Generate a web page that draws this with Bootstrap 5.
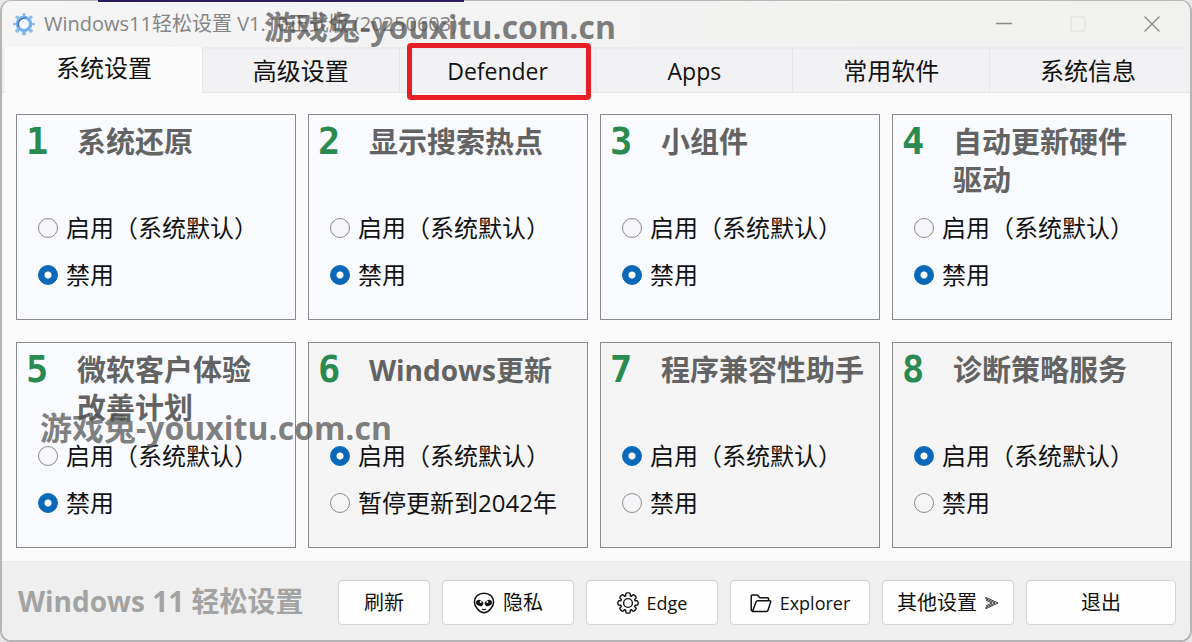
<!DOCTYPE html>
<html lang="zh-CN">
<head>
<meta charset="utf-8">
<meta name="viewport" content="width=device-width, initial-scale=1">
<title>Windows11轻松设置</title>
<link href="https://cdn.jsdelivr.net/npm/bootstrap@5.3.0/dist/css/bootstrap.min.css" rel="stylesheet">
<style>
  body { font-family: "Open Sans", "Noto Sans CJK SC", sans-serif; background: #e9e9ea; color: #111; }
  .desk-strip { top: 0; left: 98px; width: 366px; height: 2px; background: #2b1a5c; z-index: 2; }
  .app-window { min-height: 100vh; border: 2px solid #b5b5b5; border-top-width: 1px; border-radius: 11px; background: #fbfbfb; overflow: hidden; }
  .title-bar { height: 46px; padding: 0 28px 0 10px; background: linear-gradient(90deg, #f5f5f6, #f1f1ef); }
  .title-text { font-size: 20px; line-height: 28px; color: #858585; margin-left: 8px; }
  .win-controls { gap: 54px; }
  .win-btn { width: 20px; height: 20px; border: 0; padding: 0; background: none; display: flex; align-items: center; justify-content: center; }
  .tab-strip { height: 46px; padding: 0 4px 0 3px; background: #f1f1f2; border-bottom: 1px solid #e6e6e8; }
  .tab-btn { position: relative; flex: 1 1 0; min-width: 0; border: 0; border-left: 1px solid #e7e7ea; border-top: 2px solid #ececee; background: #f2f2f4; padding: 0; font-size: 24px; line-height: 36px; color: #111; }
  .tab-btn.latin { font-size: 23px; }
  .tab-btn.current { background: #fbfbfb; border-color: #fbfbfb; padding-bottom: 6px; margin-bottom: -1px; }
  .marker { position: absolute; inset: -6px 4px -8px 7px; border: 5px solid #e81e25; border-radius: 4px; pointer-events: none; }
  .option-grid { display: grid; grid-template-columns: repeat(4, 1fr); gap: 22px 12px; padding: 21px 18px 13px 14px; }
  .option-card { border: 1px solid #8b8b8f; background: #fafbff; min-height: 206px; padding: 0 8px 21px 9px; display: flex; flex-direction: column; }
  .option-card.plain { background: #f5f5f5; }
  .option-head { height: 89px; padding-top: 8px; }
  .option-num { width: 51px; flex: none; font: bold 37px/38px "DejaVu Sans Mono", monospace; color: #2a8b50; }
  .option-title { font-size: 29px; line-height: 38px; font-weight: 700; color: #636363; margin: 0; white-space: nowrap; }
  .option-title.latin { font-size: 28px; }
  .option-line { height: 47px; padding-left: 12px; gap: 8px; }
  .option-line .form-check-input { width: 20px; height: 20px; margin: 0; border: 1px solid #8d8d8d; background-color: #f6f6f8; flex: none; }
  .option-line .form-check-input:checked { border-color: #0a68b8; background: radial-gradient(circle, #fff 0 3px, #0a68b8 4px); }
  .option-line label { font-size: 24px; line-height: 36px; white-space: nowrap; }
  .foot-bar { background: #efefef; border-top: 1px solid #e8e8e8; padding: 18px 14px 15px 16px; }
  .brand-text { font-size: 28px; line-height: 42px; font-weight: 700; color: #a3a3a3; white-space: nowrap; }
  .foot-actions { gap: 12px; }
  .foot-btn { height: 45px; padding: 0; border: 1px solid #d4d4d4; border-radius: 4px; background: #fefefe; font-size: 20px; line-height: 28px; color: #111; display: flex; align-items: center; justify-content: center; gap: 8px; white-space: nowrap; }
  .foot-btn.latin { font-size: 18px; }
  .w-a { width: 92px; } .w-b { width: 132px; } .w-c { width: 140px; } .w-d { width: 150px; }
  .wm { position: absolute; z-index: 5; font-size: 32px; line-height: 40px; font-weight: 700; color: rgba(80, 80, 80, .72); white-space: nowrap; pointer-events: none; }
  .wm-top { left: 264px; top: 7px; }
  .wm-low { left: 40px; top: 408px; }
  @media (max-width: 1100px) {
    .option-grid { grid-template-columns: repeat(auto-fill, minmax(270px, 1fr)); }
    .foot-bar, .foot-actions { flex-wrap: wrap; }
  }
</style>
</head>
<body>
<div class="position-absolute desk-strip"></div>
<div class="app-window position-relative d-flex flex-column">
  <header class="title-bar d-flex align-items-center">
    <svg width="24" height="24" viewBox="0 0 24 24" aria-hidden="true">
      <g fill="#8fbdea"><circle cx="12" cy="2.6" r="1.7"/><circle cx="18.8" cy="5.2" r="1.7"/><circle cx="21.6" cy="12" r="1.5"/><circle cx="18.8" cy="18.8" r="2"/><circle cx="12" cy="21.4" r="2.2"/><circle cx="5.2" cy="18.8" r="2"/><circle cx="2.4" cy="12" r="1.5"/><circle cx="5.2" cy="5.2" r="1.7"/></g>
      <circle cx="12" cy="12" r="6.6" fill="#f7fbff" stroke="#78b0ea" stroke-width="3.4"/>
      <path d="M7 15a6 6 0 0 1 7-8.600" fill="none" stroke="#3c6eaa" stroke-width="1.300"/>
    </svg>
    <div class="title-text text-nowrap">Windows11轻松设置 V1.10正式版 (20250603)</div>
    <div class="d-flex ms-auto win-controls">
      <button class="win-btn" type="button" aria-label="最小化"><svg width="18" height="18"><path d="M1 8.500h16" stroke="#888" stroke-width="1.300"/></svg></button>
      <button class="win-btn" type="button" aria-label="最大化" disabled><svg width="18" height="18"><rect x="2" y="2" width="14" height="14" rx="1" fill="none" stroke="#dcdcdc"/></svg></button>
      <button class="win-btn" type="button" aria-label="关闭"><svg width="18" height="18"><path d="M1.500 1.500l15 15M16.500 1.500l-15 15" stroke="#888" stroke-width="1.300"/></svg></button>
    </div>
  </header>

  <nav class="tab-strip d-flex" role="tablist">
    <button class="tab-btn current" role="tab" aria-selected="true" type="button">系统设置</button>
    <button class="tab-btn" role="tab" type="button">高级设置</button>
    <button class="tab-btn latin" role="tab" type="button">Defender<span class="marker"></span></button>
    <button class="tab-btn latin" role="tab" type="button">Apps</button>
    <button class="tab-btn" role="tab" type="button">常用软件</button>
    <button class="tab-btn" role="tab" type="button">系统信息</button>
  </nav>

  <main class="option-grid flex-grow-1">
    <section class="option-card">
      <div class="option-head d-flex"><span class="option-num">1</span><h2 class="option-title">系统还原</h2></div>
      <div class="option-line d-flex align-items-center"><input class="form-check-input" type="radio" name="g1" id="g1a"><label for="g1a">启用（系统默认）</label></div>
      <div class="option-line d-flex align-items-center"><input class="form-check-input" type="radio" name="g1" id="g1b" checked><label for="g1b">禁用</label></div>
    </section>
    <section class="option-card">
      <div class="option-head d-flex"><span class="option-num">2</span><h2 class="option-title">显示搜索热点</h2></div>
      <div class="option-line d-flex align-items-center"><input class="form-check-input" type="radio" name="g2" id="g2a"><label for="g2a">启用（系统默认）</label></div>
      <div class="option-line d-flex align-items-center"><input class="form-check-input" type="radio" name="g2" id="g2b" checked><label for="g2b">禁用</label></div>
    </section>
    <section class="option-card">
      <div class="option-head d-flex"><span class="option-num">3</span><h2 class="option-title">小组件</h2></div>
      <div class="option-line d-flex align-items-center"><input class="form-check-input" type="radio" name="g3" id="g3a"><label for="g3a">启用（系统默认）</label></div>
      <div class="option-line d-flex align-items-center"><input class="form-check-input" type="radio" name="g3" id="g3b" checked><label for="g3b">禁用</label></div>
    </section>
    <section class="option-card">
      <div class="option-head d-flex"><span class="option-num">4</span><h2 class="option-title">自动更新硬件<br>驱动</h2></div>
      <div class="option-line d-flex align-items-center"><input class="form-check-input" type="radio" name="g4" id="g4a"><label for="g4a">启用（系统默认）</label></div>
      <div class="option-line d-flex align-items-center"><input class="form-check-input" type="radio" name="g4" id="g4b" checked><label for="g4b">禁用</label></div>
    </section>
    <section class="option-card">
      <div class="option-head d-flex"><span class="option-num">5</span><h2 class="option-title">微软客户体验<br>改善计划</h2></div>
      <div class="option-line d-flex align-items-center"><input class="form-check-input" type="radio" name="g5" id="g5a"><label for="g5a">启用（系统默认）</label></div>
      <div class="option-line d-flex align-items-center"><input class="form-check-input" type="radio" name="g5" id="g5b" checked><label for="g5b">禁用</label></div>
    </section>
    <section class="option-card plain">
      <div class="option-head d-flex"><span class="option-num">6</span><h2 class="option-title latin">Windows更新</h2></div>
      <div class="option-line d-flex align-items-center"><input class="form-check-input" type="radio" name="g6" id="g6a" checked><label for="g6a">启用（系统默认）</label></div>
      <div class="option-line d-flex align-items-center"><input class="form-check-input" type="radio" name="g6" id="g6b"><label for="g6b">暂停更新到2042年</label></div>
    </section>
    <section class="option-card plain">
      <div class="option-head d-flex"><span class="option-num">7</span><h2 class="option-title">程序兼容性助手</h2></div>
      <div class="option-line d-flex align-items-center"><input class="form-check-input" type="radio" name="g7" id="g7a" checked><label for="g7a">启用（系统默认）</label></div>
      <div class="option-line d-flex align-items-center"><input class="form-check-input" type="radio" name="g7" id="g7b"><label for="g7b">禁用</label></div>
    </section>
    <section class="option-card plain">
      <div class="option-head d-flex"><span class="option-num">8</span><h2 class="option-title">诊断策略服务</h2></div>
      <div class="option-line d-flex align-items-center"><input class="form-check-input" type="radio" name="g8" id="g8a" checked><label for="g8a">启用（系统默认）</label></div>
      <div class="option-line d-flex align-items-center"><input class="form-check-input" type="radio" name="g8" id="g8b"><label for="g8b">禁用</label></div>
    </section>
  </main>

  <footer class="foot-bar d-flex align-items-start">
    <div class="brand-text">Windows 11 轻松设置</div>
    <div class="foot-actions d-flex ms-auto">
      <button class="foot-btn w-a" type="button">刷新</button>
      <button class="foot-btn w-b" type="button">
        <svg width="22" height="22" viewBox="0 0 22 22" aria-hidden="true"><path d="M11 1.200C5.500 1.200 1.400 4.800 1.400 10c0 5 5.600 10.800 9.600 10.800S20.600 15 20.600 10c0-5.200-4.100-8.800-9.600-8.800z" fill="none" stroke="#111" stroke-width="1.500"/><ellipse cx="6.600" cy="11" rx="3.800" ry="2.900" transform="rotate(28 6.600 11)" fill="#111"/><ellipse cx="15.400" cy="11" rx="3.800" ry="2.900" transform="rotate(-28 15.400 11)" fill="#111"/><circle cx="7.600" cy="10" r="1" fill="#fff"/><circle cx="14.400" cy="10" r="1" fill="#fff"/><path d="M9 17q2 1.300 4 0" fill="none" stroke="#111" stroke-width="1.200"/></svg>
        隐私</button>
      <button class="foot-btn latin w-b" type="button">
        <svg width="22" height="22" viewBox="0 0 22 22" fill="none" stroke="#111" stroke-width="1.400" aria-hidden="true"><circle cx="11" cy="11" r="4.400"/><path d="M8.700 3.800V2.400a1.500 1.500 0 0 1 1.500-1.500h1.600a1.500 1.500 0 0 1 1.500 1.500v1.400l1.100.5 1-1a1.500 1.500 0 0 1 2.100 0l1.200 1.200a1.500 1.500 0 0 1 0 2.100l-1 1 .5 1.100h1.400a1.500 1.500 0 0 1 1.500 1.500v1.600a1.500 1.500 0 0 1-1.500 1.500h-1.400l-.5 1.100 1 1a1.500 1.500 0 0 1 0 2.100l-1.200 1.200a1.500 1.500 0 0 1-2.100 0l-1-1-1.100.5v1.400a1.500 1.500 0 0 1-1.500 1.500h-1.600a1.500 1.500 0 0 1-1.500-1.500v-1.400l-1.100-.5-1 1a1.500 1.500 0 0 1-2.100 0l-1.200-1.200a1.500 1.500 0 0 1 0-2.100l1-1-.5-1.100H2.400a1.500 1.500 0 0 1-1.500-1.500v-1.600a1.500 1.500 0 0 1 1.500-1.500h1.400l.5-1.100-1-1a1.500 1.500 0 0 1 0-2.100l1.200-1.200a1.500 1.500 0 0 1 2.100 0l1 1z"/></svg>
        Edge</button>
      <button class="foot-btn latin w-c" type="button">
        <svg width="22" height="22" viewBox="0 0 22 22" fill="none" stroke="#111" stroke-width="1.500" stroke-linejoin="round" aria-hidden="true"><path d="M2.500 19.500L1.200 18V4.200q0-1.200 1.200-1.200h5l2.400 2.800h7.600q1.200 0 1.200 1.200v1.700M2.500 19.500L6 10q.4-1.200 1.600-1.200h12q1.400 0 1 1.300L18 18.300q-.4 1.200-1.600 1.200z"/></svg>
        Explorer</button>
      <button class="foot-btn w-b" type="button">其他设置
        <svg width="14" height="14" viewBox="0 0 14 14" fill="none" stroke="#222" stroke-width=".9" aria-hidden="true"><path d="M1 1.500L13 7 1 12.500M1 4.200L7 7 1 9.800M1 2.800L10 7 1 11.200M1 1v2M1 11v2"/></svg></button>
      <button class="foot-btn w-d" type="button">退出</button>
    </div>
  </footer>
</div>
<div class="wm wm-top" aria-hidden="true">游戏兔-youxitu.com.cn</div>
<div class="wm wm-low" aria-hidden="true">游戏兔-youxitu.com.cn</div>
<script src="https://cdn.jsdelivr.net/npm/bootstrap@5.3.0/dist/js/bootstrap.bundle.min.js"></script>
</body>
</html>
